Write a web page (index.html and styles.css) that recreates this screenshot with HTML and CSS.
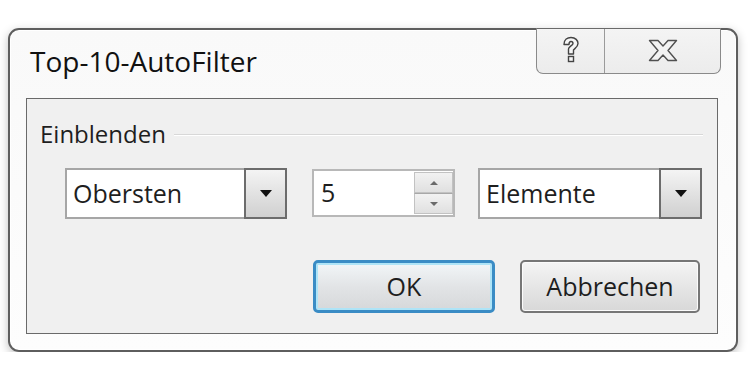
FILE: index.html
```html
<!DOCTYPE html>
<html lang="de">
<head>
    <meta charset="UTF-8">
    <title>Top-10-AutoFilter</title>
    <link rel="stylesheet" href="styles.css">
</head>
<body>

<div class="dialog">
    <div class="titlebar">
        <div class="title">Top-10-AutoFilter</div>
        <div class="caption-buttons">
            <div class="cap-btn help">
                <svg width="18" height="28" viewBox="0 0 18 28">
                    <path d="M2 8.5 C2 3.5 5.5 1.5 9 1.5 C13.5 1.5 16 4.5 16 7.5 C16 11 12.5 12.5 11.5 14 L11.5 18 L6.5 18 L6.5 13 C6.5 10.5 11 9.5 11 7.5 C11 6 10 5.5 9 5.5 C7.5 5.5 7 6.5 7 8.5 Z" fill="#f6f6f6" stroke="#444" stroke-width="1.4" stroke-linejoin="round"/>
                    <rect x="6.5" y="20.5" width="5" height="5" fill="#f6f6f6" stroke="#444" stroke-width="1.4"/>
                </svg>
            </div>
            <div class="cap-btn close">
                <svg width="30" height="23" viewBox="0 0 30 23">
                    <path d="M1.5 1.5 L10 1.5 L15 7 L20 1.5 L28.5 1.5 L20 11.5 L28.5 21.5 L20 21.5 L15 16 L10 21.5 L1.5 21.5 L10 11.5 Z" fill="#f2f2f2" stroke="#505050" stroke-width="1.4" stroke-linejoin="round"/>
                </svg>
            </div>
        </div>
    </div>

    <div class="panel">
        <div class="group-head">
            <span class="group-label">Einblenden</span>
            <span class="group-line"></span>
        </div>

        <div class="controls">
            <div class="combo combo-first">
                <span class="combo-text">Obersten</span>
                <span class="drop-btn"><span class="arrow"></span></span>
            </div>
            <div class="spin">
                <span class="spin-text">5</span>
                <span class="spin-btns">
                    <span class="spin-up"><span class="tri-up"></span></span>
                    <span class="spin-down"><span class="tri-down"></span></span>
                </span>
            </div>
            <div class="combo combo-second">
                <span class="combo-text">Elemente</span>
                <span class="drop-btn"><span class="arrow"></span></span>
            </div>
        </div>

        <div class="actions">
            <button type="button" class="btn btn-ok">OK</button>
            <button type="button" class="btn btn-cancel">Abbrechen</button>
        </div>
    </div>
</div>

</body>
</html>
```

FILE: styles.css
```css
body {
    margin: 0;
    background: #ffffff;
    font-family: "Open Sans", "Noto Sans", sans-serif;
    color: #1e1e1e;
}

.dialog {
    margin: 28px 0 0 8px;
    width: 726px;
    height: 320px;
    border: 2px solid #5e5e5e;
    border-radius: 11px;
    background: linear-gradient(#f9f9f9, #fdfdfd);
    box-shadow: 0 3px 10px rgba(0, 0, 0, 0.25), inset 0 0 0 1px #ffffff;
    display: flex;
    flex-direction: column;
}

.titlebar {
    height: 68px;
    display: flex;
    justify-content: space-between;
    align-items: flex-start;
}

.title {
    margin: 12px 0 0 20px;
    font-size: 28px;
    color: #111;
}

.caption-buttons {
    margin: -2px 15px 0 0;
    display: flex;
    height: 46px;
    box-sizing: border-box;
    border: 1.5px solid #8a8a8a;
    border-top-color: #6a6a6a;
    border-radius: 0 0 7px 7px;
    background: linear-gradient(#f4f4f4, #ececec);
    overflow: hidden;
}

.cap-btn {
    display: flex;
    align-items: center;
    justify-content: center;
}

.help {
    width: 67px;
    border-right: 1px solid #9a9a9a;
    padding-bottom: 2px;
}

.close {
    width: 115px;
    padding-bottom: 2px;
}

.panel {
    margin: 0 18px 16px 16px;
    flex: 1;
    border: 1px solid #6a6a6a;
    background: #f0f0f0;
    padding: 0 14px 0 13px;
    display: flex;
    flex-direction: column;
}

.group-head {
    margin-top: 18px;
    display: flex;
    align-items: center;
    gap: 8px;
}

.group-label {
    font-size: 24px;
}

.group-line {
    flex: 1;
    height: 1px;
    background: #d8d8d8;
    box-shadow: 0 1px 0 #ffffff;
    margin-top: 1px;
}

.controls {
    margin: 18px 0 0 25px;
    display: flex;
    align-items: flex-start;
}

.combo {
    height: 51px;
    box-sizing: border-box;
    display: flex;
    align-items: center;
    background: #ffffff;
    border: 2px solid #a6a6a6;
}

.combo-first {
    width: 222px;
}

.combo-second {
    width: 224px;
    margin-left: 23px;
}

.combo-text {
    flex: 1;
    font-size: 25px;
    padding: 0 0 2px 6px;
}

.drop-btn {
    align-self: stretch;
    width: 39px;
    margin: -2px -2px -2px 0;
    border: 2px solid #6c6c6c;
    background: linear-gradient(#f4f4f4, #d0d0d0);
    display: flex;
    align-items: center;
    justify-content: center;
}

.arrow {
    width: 0;
    height: 0;
    border-left: 6px solid transparent;
    border-right: 6px solid transparent;
    border-top: 7px solid #111;
}

.spin {
    width: 143px;
    height: 48px;
    margin: 1px 0 0 25px;
    box-sizing: border-box;
    display: flex;
    align-items: center;
    background: #ffffff;
    border: 2px solid #b8b8b8;
}

.spin-text {
    flex: 1;
    font-size: 25px;
    padding: 0 0 2px 7px;
}

.spin-btns {
    align-self: stretch;
    width: 39px;
    display: flex;
    flex-direction: column;
    padding: 1px 0;
}

.spin-up,
.spin-down {
    flex: 1;
    display: flex;
    align-items: center;
    justify-content: center;
    background: linear-gradient(#f2f2f2, #e0e0e0);
    border: 1px solid #c2c2c2;
}

.spin-down {
    border-top-color: #a8a8a8;
}

.tri-up {
    border-left: 4px solid transparent;
    border-right: 4px solid transparent;
    border-bottom: 4px solid #6a6a6a;
}

.tri-down {
    border-left: 4px solid transparent;
    border-right: 4px solid transparent;
    border-top: 4px solid #6a6a6a;
}

.actions {
    margin: 41px 0 0 273px;
    display: flex;
    gap: 25px;
}

.btn {
    height: 53px;
    font-family: "Open Sans", "Noto Sans", sans-serif;
    font-size: 25px;
    color: #1e1e1e;
    border-radius: 5px;
    cursor: pointer;
    box-sizing: border-box;
    padding: 0 0 2px;
}

.btn-ok {
    width: 182px;
    border: 3px solid #3a8cc5;
    background: linear-gradient(#f2f6f8, #e2e4e6 50%, #d6d8da);
    box-shadow: inset 0 0 0 2px #aee4f7;
}

.btn-cancel {
    width: 180px;
    border: 2px solid #767676;
    background: linear-gradient(#f4f4f4, #e6e6e6 50%, #d8d8d8);
    box-shadow: inset 0 0 0 1px #fbfbfb;
}
```
